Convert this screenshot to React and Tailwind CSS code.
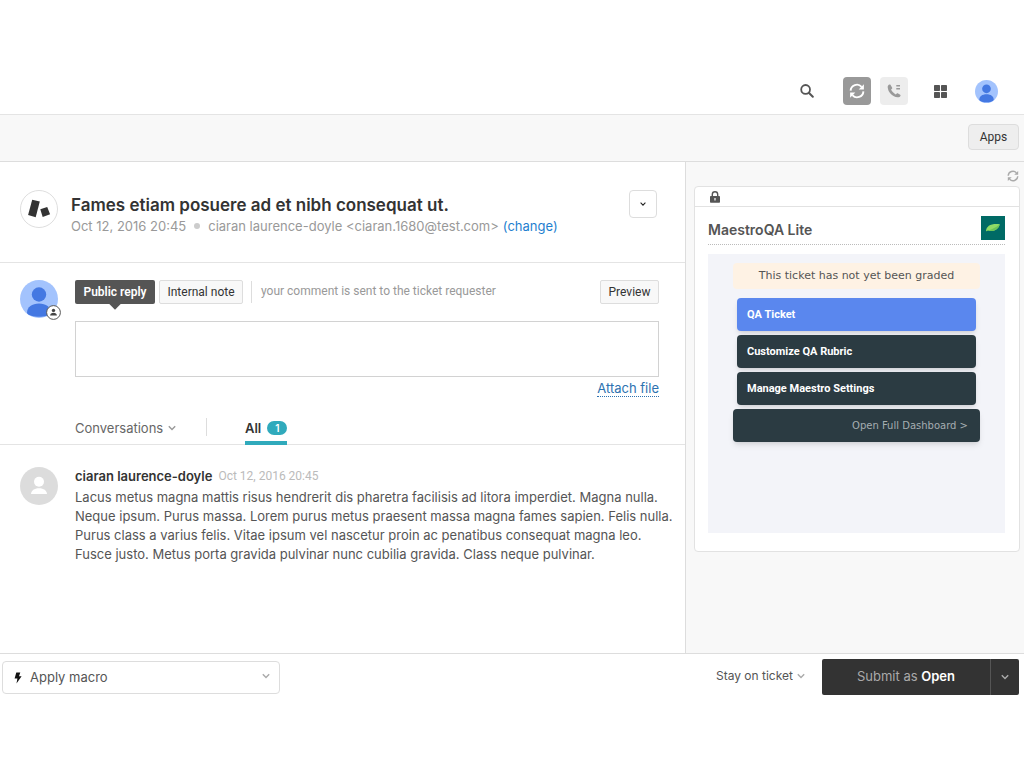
import { clsx } from "clsx";

const MACROS = ["Apply macro"];

const COMMENT =
  "Lacus metus magna mattis risus hendrerit dis pharetra facilisis ad litora imperdiet. Magna nulla. Neque ipsum. Purus massa. Lorem purus metus praesent massa magna fames sapien. Felis nulla. Purus class a varius felis. Vitae ipsum vel nascetur proin ac penatibus consequat magna leo. Fusce justo. Metus porta gravida pulvinar nunc cubilia gravida. Class neque pulvinar.";

/* Icons */

function SyncIcon({ className }) {
  return (
    <svg viewBox="0 0 16 16" className={className} aria-hidden="true">
      <g fill="none" stroke="currentColor" strokeWidth="1.9">
        <path d="M1.6 7.6A6.3 6.3 0 0 1 12.6 3.8" />
        <path d="M14.4 8.4A6.3 6.3 0 0 1 3.4 12.2" />
      </g>
      <path d="M14.9 1.2v5.2H9.7z" fill="currentColor" />
      <path d="M1.1 14.8V9.6h5.2z" fill="currentColor" />
    </svg>
  );
}

function SearchIcon() {
  return (
    <svg viewBox="0 0 14 14" className="size-3.5" aria-hidden="true">
      <g fill="none" stroke="currentColor">
        <circle cx="5.6" cy="5.4" r="4.4" strokeWidth="1.8" />
        <path d="M8.8 8.8l4 4" strokeWidth="2" strokeLinecap="round" />
      </g>
    </svg>
  );
}

function PhoneIcon() {
  return (
    <svg viewBox="0 0 14 14" className="size-3.5" fill="currentColor" aria-hidden="true">
      <path d="M2.6.6C1.4.9.6 1.9.7 3.3c.3 5 4.9 9.7 9.9 10 1.3.1 2.5-.6 2.9-1.6.2-.4 0-.7-.3-.9l-2.5-1.5c-.3-.2-.7-.1-.9.1l-1 1C7 9.700 4.800 7.500 4.100 5.600l1-1c.2-.3.3-.6.1-.9L3.600 1c-.2-.4-.6-.5-1-.4z" />
      <path d="M9.300 1h3.700v1.500H9.300zM9.300 4h3.700v1.500H9.300z" />
    </svg>
  );
}

function GridIcon() {
  return (
    <svg viewBox="0 0 13 13" className="size-[13px]" fill="currentColor" aria-hidden="true">
      <rect width="6" height="6" rx=".7" />
      <rect x="7" width="6" height="6" rx=".7" />
      <rect y="7" width="6" height="6" rx=".7" />
      <rect x="7" y="7" width="6" height="6" rx=".7" />
    </svg>
  );
}

function Chevron({ className }) {
  return (
    <svg viewBox="0 0 8 6" className={className} aria-hidden="true">
      <path d="M.8 1.200L4 4.500l3.200-3.300" fill="none" stroke="currentColor" strokeWidth="1.4" />
    </svg>
  );
}

function BlueAvatar({ className }) {
  return (
    <svg viewBox="0 0 38 38" className={className} role="img" aria-label="Agent">
      <clipPath id="agent-clip">
        <circle cx="19" cy="19" r="19" />
      </clipPath>
      <g clipPath="url(#agent-clip)">
        <rect width="38" height="38" fill="#a3c3fd" />
        <circle cx="19" cy="14.500" r="7.200" fill="#4478e2" />
        <path d="M7 33c0-6 5-9.500 12-9.500S31 27 31 33c-2 5-22 5-24 0z" fill="#4478e2" />
      </g>
    </svg>
  );
}

function GreyAvatar() {
  return (
    <svg viewBox="0 0 38 38" className="size-[38px]" role="img" aria-label="Requester">
      <circle cx="19" cy="19" r="19" fill="#dcdcdc" />
      <circle cx="19" cy="14.800" r="5" fill="#fff" />
      <path d="M11 27c.2-3.600 3.200-5.800 8-5.800s7.800 2.200 8 5.800z" fill="#fff" />
    </svg>
  );
}

function BrandLogo() {
  return (
    <svg viewBox="0 0 38 38" className="size-[38px]" role="img" aria-label="Brand">
      <circle cx="19" cy="19" r="18.500" fill="#fff" stroke="#dedede" />
      <path d="M12.200 9.700l7.600 1.900-4.100 15.600-7.600-2.300z" fill="#333" />
      <path d="M20.300 19.200l6.900-2.100 2.900 7.200-7.400 2.600z" fill="#333" />
    </svg>
  );
}

function PersonBadge() {
  return (
    <svg viewBox="0 0 15 15" className="size-[15px]" aria-hidden="true">
      <circle cx="7.500" cy="7.500" r="6.900" fill="#fff" stroke="#555" strokeWidth="1" />
      <circle cx="7.500" cy="5.400" r="1.700" fill="#444" />
      <path d="M4.100 10.500c.2-1.800 1.400-2.700 3.400-2.700s3.200.9 3.400 2.700z" fill="#444" />
    </svg>
  );
}

function LockIcon() {
  return (
    <svg viewBox="0 0 10 12" className="h-3 w-2.5" aria-hidden="true">
      <path d="M2.300 5.500V3.400a2.700 2.700 0 0 1 5.400 0v2.100" fill="none" stroke="#555" strokeWidth="1.400" />
      <rect y="5" width="10" height="6.700" rx=".8" fill="#555" />
      <path d="M4.400 7h1.200v2.500H4.400z" fill="#fff" />
    </svg>
  );
}

function LeafLogo() {
  return (
    <svg viewBox="0 0 24 24" className="size-6" role="img" aria-label="MaestroQA">
      <rect width="24" height="24" fill="#006a65" />
      <path d="M5 15.200C5.400 10 10 7.300 18.800 8.300c-1.500 5.600-6.500 7.900-11.600 6.200z" fill="#8fdc66" />
      <path d="M5 15.200c3-.3 9-3 13.800-6.900-1.500 5.600-6.500 7.900-11.600 6.200z" fill="#6cc658" />
    </svg>
  );
}

function BoltIcon() {
  return (
    <svg viewBox="0 0 8 12" className="h-3 w-2" aria-hidden="true">
      <path d="M2.300.4h4L5 4.200h2.600L2.500 11.600l.9-5H.6z" fill="#111" />
    </svg>
  );
}

/* Page parts */

function TopBar() {
  return (
    <header className="flex h-[47px] items-center justify-end border-b border-[#e4e4e4] pr-[26px] text-[#555]">
      <button aria-label="Search" className="mr-[29px]">
        <SearchIcon />
      </button>
      <button
        aria-label="Refresh"
        className="mr-[9px] flex size-7 items-center justify-center rounded-sm bg-[#999] text-white"
      >
        <SyncIcon className="size-4" />
      </button>
      <button
        aria-label="Call"
        className="mr-[26px] flex size-7 items-center justify-center rounded-sm bg-[#ededed] text-[#999]"
      >
        <PhoneIcon />
      </button>
      <button aria-label="Products" className="mr-7">
        <GridIcon />
      </button>
      <button aria-label="Profile">
        <BlueAvatar className="size-[23px]" />
      </button>
    </header>
  );
}

function TicketHeader() {
  return (
    <div className="flex h-[101px] items-start border-b border-[#e4e4e4] pt-7 pr-7 pl-5">
      <BrandLogo />
      <div className="ml-[13px] flex-1 pt-1">
        <h1 className="text-[17px] leading-[22px] font-semibold text-[#333]">
          Fames etiam posuere ad et nibh consequat ut.
        </h1>
        <p className="flex items-center text-[13px] leading-5 text-[#999]">
          <span>Oct 12, 2016 20:45</span>
          <span className="mx-2 size-1.5 rounded-full bg-[#ccc]" />
          <span>ciaran laurence-doyle &lt;ciaran.1680@test.com&gt;</span>
          <a href="#change" className="ml-1 text-[#1f7fcf]">
            (change)
          </a>
        </p>
      </div>
      <button
        aria-label="Ticket options"
        className="flex size-7 items-center justify-center rounded-sm border border-[#ddd] text-[#222]"
      >
        <Chevron className="h-1.5 w-1.5" />
      </button>
    </div>
  );
}

function Composer() {
  return (
    <div className="flex pt-[17px] pr-[26px] pl-5">
      <div className="relative size-[38px]">
        <BlueAvatar className="size-[38px]" />
        <span className="absolute -right-[3px] -bottom-0.5">
          <PersonBadge />
        </span>
      </div>
      <div className="ml-[17px] flex-1">
        <div className="flex items-start font-['Roboto',sans-serif] text-xs leading-4">
          <button className="relative h-6 w-20 rounded-xs bg-[#555] font-semibold text-white">
            Public reply
            <span className="absolute -bottom-1 left-9 size-2 rotate-45 bg-[#555]" />
          </button>
          <button className="ml-1 h-6 w-[84px] rounded-xs border border-[#ddd] bg-[#f8f8f8] text-[#333]">
            Internal note
          </button>
          <span className="mt-px ml-2 h-[22px] w-px bg-[#ddd]" />
          <label htmlFor="reply" className="ml-[9px] pt-[3px] text-[#999]">
            your comment is sent to the ticket requester
          </label>
          <button className="ml-auto h-6 w-[59px] rounded-xs border border-[#ddd] bg-[#f8f8f8] text-[#333]">
            Preview
          </button>
        </div>
        <textarea
          id="reply"
          className="mt-[17px] block h-14 w-full resize-none border border-[#d2d2d2] p-2 text-[13px]"
        />
        <div className="flex justify-end pt-[3px]">
          <a
            href="#attach"
            className="border-b border-dotted border-[#2d72b0] text-[13px] leading-4 text-[#2d72b0]"
          >
            Attach file
          </a>
        </div>
      </div>
    </div>
  );
}

function ConversationTabs() {
  return (
    <div className="mt-[21px] flex h-[27px] items-start border-b border-[#e4e4e4] pl-[75px] text-[13px] leading-5">
      <label className="flex items-center text-[#666]">
        <select
          aria-label="Conversation filter"
          className="appearance-none"
        >
          <option>Conversations</option>
        </select>
        <Chevron className="ml-1 h-1.5 w-2 text-[#999]" />
      </label>
      <span className="ml-[30px] h-[18px] w-px bg-[#ddd]" />
      <button className="ml-[38px] flex h-[27px] items-start border-b-4 border-[#30aabc] font-semibold text-[#333]">
        All
        <span className="mt-[3px] ml-1.5 h-3.5 w-5 rounded-full bg-[#30aabc] text-[10px] leading-3.5 text-white">
          1
        </span>
      </button>
    </div>
  );
}

function Comment() {
  return (
    <article className="flex pt-[22px] pr-3 pl-5">
      <GreyAvatar />
      <div className="ml-[17px] flex-1 text-[13px] leading-[19px] text-[#555]">
        <div className="mb-0.5 flex">
          <h2 className="font-semibold text-[#333]">ciaran laurence-doyle</h2>
          <time className="ml-1.5 font-['Roboto',sans-serif] text-xs leading-[19px] text-[#bbb]">
            Oct 12, 2016 20:45
          </time>
        </div>
        <p>{COMMENT}</p>
      </div>
    </article>
  );
}

const QA_ACTIONS = [
  { label: "QA Ticket", primary: true },
  { label: "Customize QA Rubric" },
  { label: "Manage Maestro Settings" },
];

function AppsSidebar() {
  return (
    <aside className="w-[339px] shrink-0 border-l border-[#ddd] bg-[#f8f8f8] pr-1 pb-[101px] pl-2">
      <div className="flex h-6 items-end justify-end pr-px pb-1 text-[#aaa]">
        <button aria-label="Reload apps">
          <SyncIcon className="size-3" />
        </button>
      </div>
      <div className="rounded-sm border border-[#e2e2e2] bg-white">
        <div className="flex h-5 items-center border-b border-[#e2e2e2] pl-[15px]">
          <LockIcon />
        </div>
        <div className="pr-3.5 pb-[18px] pl-[13px]">
          <div className="flex items-start justify-between border-b border-dotted border-[#bbb] pt-[9px] pb-1">
            <h2 className="pt-1 text-sm leading-5 font-semibold text-[#555]">MaestroQA Lite</h2>
            <LeafLogo />
          </div>
          <div className="mt-[9px] bg-[#f3f4f9] px-[25px] pt-[9px] pb-[91px]">
            <p className="rounded-sm bg-[#fef2e4] text-center font-['DejaVu_Sans',sans-serif] text-[11px] leading-[26px] text-[#555]">
              This ticket has not yet been graded
            </p>
            <div className="mt-[9px] flex flex-col gap-1">
              {QA_ACTIONS.map((action) => (
                <button
                  key={action.label}
                  className={clsx(
                    "mx-1 h-[33px] rounded-sm pt-0.5 pl-2.5 text-left font-['Roboto',sans-serif] text-[11px] font-bold text-white shadow-md",
                    action.primary ? "bg-[#5a87ee]" : "bg-[#2b3b42]",
                  )}
                >
                  {action.label}
                </button>
              ))}
              <button className="h-[33px] rounded-sm bg-[#2b3b42] pr-3 text-right font-['DejaVu_Sans',sans-serif] text-[10px] text-[#a5adb1] shadow-md">
                Open Full Dashboard &gt;
              </button>
            </div>
          </div>
        </div>
      </div>
    </aside>
  );
}

function FooterBar() {
  return (
    <footer className="flex items-center border-t border-[#ddd] py-[5px] pr-[5px] pl-0.5">
      <div className="relative">
        <span className="pointer-events-none absolute top-[11px] left-3">
          <BoltIcon />
        </span>
        <select
          aria-label="Macro"
          className="h-[33px] w-[278px] appearance-none rounded-sm border border-[#ddd] bg-white pt-0.5 pl-[27px] text-[13px] text-[#555]"
        >
          {MACROS.map((macro) => (
            <option key={macro}>{macro}</option>
          ))}
        </select>
        <Chevron className="pointer-events-none absolute top-3 right-2.5 h-1.5 w-2 text-[#aaa]" />
      </div>
      <label className="mb-0.5 ml-auto flex items-center text-xs text-[#555]">
        <select aria-label="After submit" className="appearance-none">
          <option>Stay on ticket</option>
        </select>
        <Chevron className="ml-1 h-1.5 w-2 text-[#aaa]" />
      </label>
      <button className="ml-[17px] h-9 w-[168px] rounded-l-xs bg-[#333] text-[13px] text-[#aaa]">
        Submit as <strong className="font-semibold text-white">Open</strong>
      </button>
      <button
        aria-label="Submit options"
        className="flex h-9 w-[29px] items-center justify-center rounded-r-xs border-l border-[#555] bg-[#333] text-[#aaa]"
      >
        <Chevron className="h-1.5 w-2" />
      </button>
    </footer>
  );
}

export default function App() {
  return (
    <div className="min-h-screen bg-white pt-[68px] font-['Inter',sans-serif]">
      <TopBar />
      <div className="flex h-[47px] items-start justify-end border-b border-[#ddd] bg-[#f8f8f8] pt-[9px] pr-[5px]">
        <button className="h-[26px] w-[51px] rounded-sm border border-[#ddd] bg-[#eee] font-['Roboto',sans-serif] text-xs text-[#333]">
          Apps
        </button>
      </div>
      <div className="flex">
        <main className="min-w-0 flex-1">
          <TicketHeader />
          <Composer />
          <ConversationTabs />
          <Comment />
        </main>
        <AppsSidebar />
      </div>
      <FooterBar />
    </div>
  );
}
